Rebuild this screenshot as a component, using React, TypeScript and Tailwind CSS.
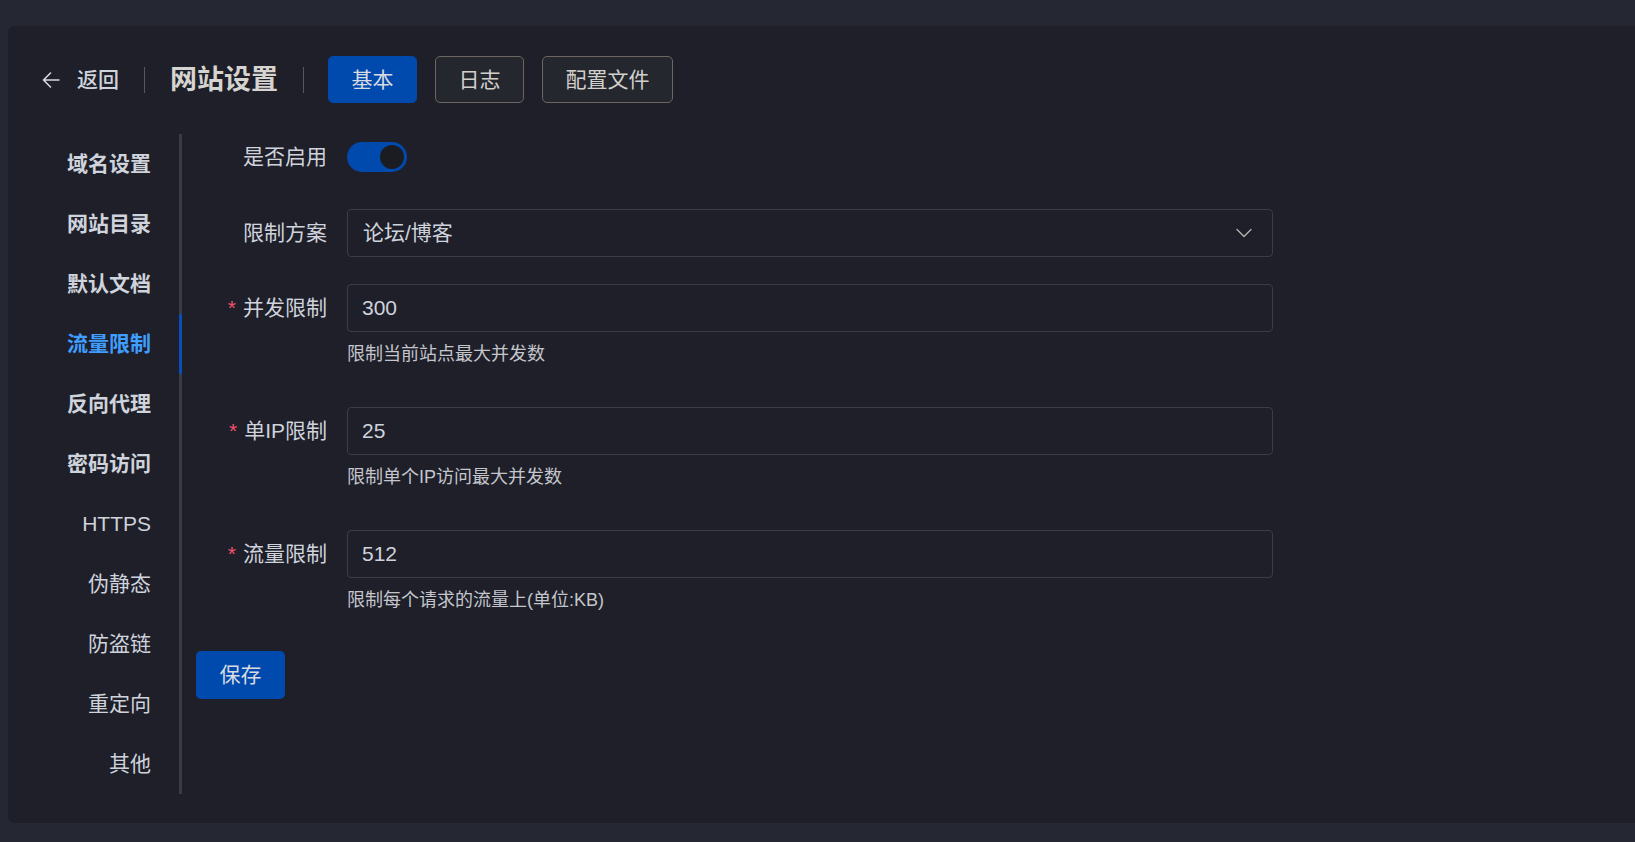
import React, { useState } from 'react';

const font = { fontFamily: '"Liberation Sans", "Noto Sans CJK SC", sans-serif' };

const tabs = [
  { label: '域名设置', bold: true },
  { label: '网站目录', bold: true },
  { label: '默认文档', bold: true },
  { label: '流量限制', bold: true },
  { label: '反向代理', bold: true },
  { label: '密码访问', bold: true },
  { label: 'HTTPS', bold: false },
  { label: '伪静态', bold: false },
  { label: '防盗链', bold: false },
  { label: '重定向', bold: false },
  { label: '其他', bold: false }
];

function ArrowLeft() {
  return (
    <svg width="18" height="16" viewBox="0 0 18 16" fill="none" className="text-[#d6d8de]">
      <path d="M17 8H1.5M8.5 1L1.5 8l7 7" stroke="currentColor" strokeWidth="1.6" strokeLinecap="round" strokeLinejoin="round" />
    </svg>
  );
}

function Chevron() {
  return (
    <svg width="16" height="10" viewBox="0 0 16 10" fill="none" className="text-[#b9b5b0]">
      <path d="M1 1.5l7 7 7-7" stroke="currentColor" strokeWidth="1.3" strokeLinecap="round" strokeLinejoin="round" />
    </svg>
  );
}

function FieldLabel({ text, required }: { text: string; required?: boolean }) {
  return (
    <div className="flex h-[48px] w-[151px] shrink-0 items-center justify-end pr-[20px] text-[21px] leading-[26px] text-[#cfd3dc]">
      {required ? <span className="mr-[7px] text-[#f0506e]">*</span> : null}
      {text}
    </div>
  );
}

function NumberField({ label, value, hint }: { label: string; value: string; hint: string }) {
  return (
    <div className="mb-[40px] flex">
      <FieldLabel text={label} required />
      <div className="w-[926px]">
        <div className="flex h-[48px] items-center rounded-[4px] border border-[#3b3c44] pl-[14px] text-[21px] text-[#cfd3dc]">
          {value}
        </div>
        <div className="mt-[9px] text-[18px] leading-[26px] text-[#c4c6cc]">{hint}</div>
      </div>
    </div>
  );
}

export default function App() {
  const [active, setActive] = useState('流量限制');
  const [enabled, setEnabled] = useState(true);
  const [top, setTop] = useState('基本');

  return (
    <div className="min-h-[842px] bg-[#252833] pb-[19px] pl-2 pt-[26px]" style={font}>
      <div className="h-[797px] rounded-l-[6px] bg-[#1e1f29] pt-[30px]">
        <div className="flex h-[47px] items-center pl-[34px]">
          <ArrowLeft />
          <span className="ml-[17px] text-[21px] font-medium leading-[26px] text-[#cfd3dc]">返回</span>
          <div className="mx-[25px] h-[26px] w-px bg-[#5a5856]" />
          <span className="text-[27px] font-bold leading-[32px] text-[#d6d4d0]">网站设置</span>
          <div className="ml-[25px] mr-[24px] h-[26px] w-px bg-[#5a5856]" />
          <div className="flex gap-[18px]">
            {['基本', '日志', '配置文件'].map((t) => (
              <button
                key={t}
                onClick={() => setTop(t)}
                className={
                  top === t
                    ? 'h-[47px] rounded-[5px] border border-[#0049ad] bg-[#0049ad] px-[22.5px] text-[21px] text-[#d8dbe2]'
                    : 'h-[47px] rounded-[5px] border border-[#6b6661] bg-[#25272e] px-[22.5px] text-[21px] text-[#d2d0cc]'
                }
              >
                {t}
              </button>
            ))}
          </div>
        </div>

        <div className="mt-[31px] flex">
          <div className="w-[174px] shrink-0">
            {tabs.map((t) => (
              <div
                key={t.label}
                onClick={() => setActive(t.label)}
                className={
                  active === t.label
                    ? 'flex h-[60px] cursor-pointer items-center justify-end border-r-[3px] border-[#0a4fb3] pr-[28px] text-[21px] font-bold text-[#409eff]'
                    : 'flex h-[60px] cursor-pointer items-center justify-end border-r-[3px] border-[#3a3c42] pr-[28px] text-[21px] text-[#cfd3dc]'
                }
              >
                <span className={t.bold ? 'font-bold' : 'font-normal'}>{t.label}</span>
              </div>
            ))}
          </div>

          <div className="-mt-px pl-[14px]">
            <div className="mb-[28px] flex">
              <FieldLabel text="是否启用" />
              <div className="flex h-[48px] items-center">
                <button
                  onClick={() => setEnabled(!enabled)}
                  className={
                    enabled
                      ? 'flex h-[30px] w-[60px] items-center justify-end rounded-full bg-[#0049ad] px-[3px]'
                      : 'flex h-[30px] w-[60px] items-center justify-start rounded-full bg-[#4c4d4f] px-[3px]'
                  }
                >
                  <span className="h-[24px] w-[24px] rounded-full bg-[#1b1c21]" />
                </button>
              </div>
            </div>

            <div className="mb-[27px] flex">
              <FieldLabel text="限制方案" />
              <div className="flex h-[48px] w-[926px] items-center justify-between rounded-[4px] border border-[#3b3c44] pl-[15px] pr-[20px] text-[21px] text-[#cfd3dc]">
                <span>论坛/博客</span>
                <Chevron />
              </div>
            </div>

            <NumberField label="并发限制" value="300" hint="限制当前站点最大并发数" />
            <NumberField label="单IP限制" value="25" hint="限制单个IP访问最大并发数" />
            <NumberField label="流量限制" value="512" hint="限制每个请求的流量上(单位:KB)" />

            <button className="-mt-[2px] h-[48px] w-[89px] rounded-[5px] bg-[#0049ad] text-[21px] text-[#d8dbe2]">保存</button>
          </div>
        </div>
      </div>
    </div>
  );
}
